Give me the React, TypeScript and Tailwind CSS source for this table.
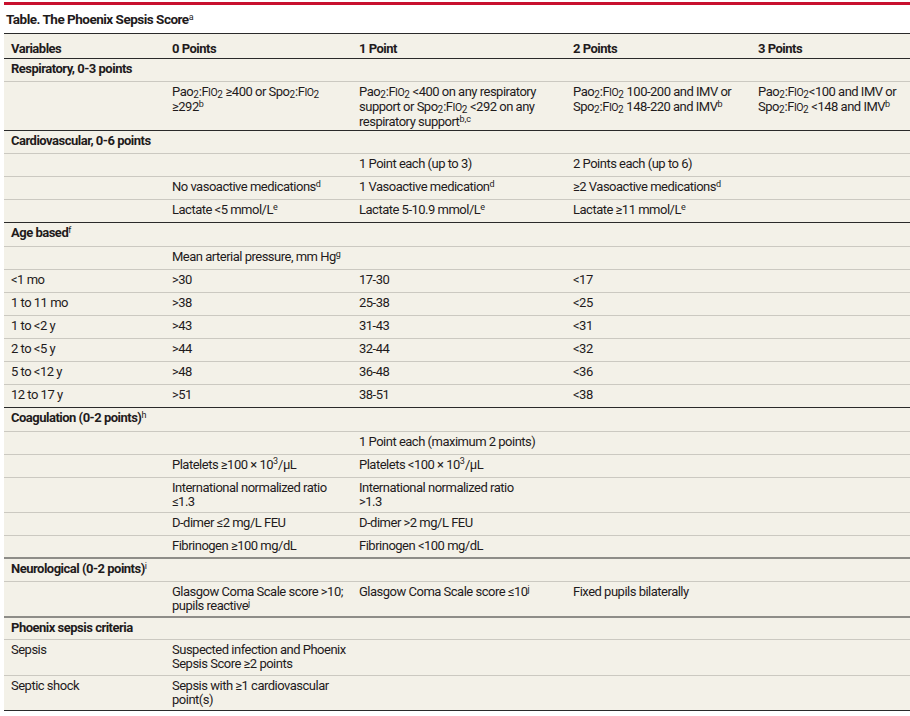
import React from 'react';

const LIGHT = 'border-t border-[#cbc9c1]';
const DARK = 'border-t border-[#2a2a2a]';
const GRAY2 = 'border-t-2 border-[#8e8d88]';

const S = ({ c }: { c: string }) => (
  <sup className="text-[9px] -top-[4px] font-normal tracking-normal">{c}</sup>
);

const Sub2 = () => <sub className="text-[10px] -bottom-[2px] tracking-normal">2</sub>;

const PF = ({ a }: { a: 'Pa' | 'Sp' }) => (
  <>
    {a}o<Sub2 />:F<span className="text-[10.5px]">IO</span>
    <Sub2 />
  </>
);

type RowProps = {
  cells: React.ReactNode[];
  cls: string;
  bold?: boolean;
  pt?: string;
};

function Row({ cells, cls, bold, pt }: RowProps) {
  return (
    <div className={`grid grid-cols-[161px_187px_214px_185px_1fr] ${cls}`}>
      {[0, 1, 2, 3, 4].map((i) => (
        <div
          key={i}
          className={`pl-[7px] leading-[14px] whitespace-nowrap ${pt ?? 'pt-[3px]'} ${bold ? 'font-bold' : ''}`}
        >
          {cells[i] ?? null}
        </div>
      ))}
    </div>
  );
}

export default function App() {
  return (
    <div className="w-[910px] h-[716px] bg-white overflow-hidden text-[#1f1b1c] [font-family:Roboto,'Liberation_Sans',sans-serif] text-[13px] tracking-[-0.5px]">
      <div className="ml-[4px] pt-[2px]">
        <div className="h-[3px] bg-[#c8102e]" />
        <div className="h-[28px] pt-[6px] pl-[2px] leading-[16px] text-[13.5px] tracking-[-0.5px] font-bold">
          Table. The Phoenix Sepsis Score<S c="a" />
        </div>
        <div className="bg-[#f3f1e8] border-b border-[#2a2a2a]">
          <Row
            cls={`h-[25px] ${DARK}`}
            bold
            pt="pt-[8px]"
            cells={['Variables', '0 Points', '1 Point', '2 Points', '3 Points']}
          />
          <Row cls={`h-[23px] ${DARK}`} bold cells={['Respiratory, 0-3 points']} />
          <Row
            cls={`h-[49px] ${LIGHT}`}
            cells={[
              '',
              <>
                <PF a="Pa" /> ≥400 or <PF a="Sp" />
                <br />
                ≥292<S c="b" />
              </>,
              <>
                <PF a="Pa" /> &lt;400 on any respiratory
                <br />
                support or <PF a="Sp" /> &lt;292 on any
                <br />
                respiratory support<S c="b,c" />
              </>,
              <>
                <PF a="Pa" /> 100-200 and IMV or
                <br />
                <PF a="Sp" /> 148-220 and IMV<S c="b" />
              </>,
              <>
                <PF a="Pa" />
                &lt;100 and IMV or
                <br />
                <PF a="Sp" /> &lt;148 and IMV<S c="b" />
              </>,
            ]}
          />
          <Row cls={`h-[23px] ${DARK}`} bold cells={['Cardiovascular, 0-6 points']} />
          <Row
            cls={`h-[23px] ${LIGHT}`}
            cells={['', '', '1 Point each (up to 3)', '2 Points each (up to 6)']}
          />
          <Row
            cls={`h-[23px] ${LIGHT}`}
            cells={[
              '',
              <>No vasoactive medications<S c="d" /></>,
              <>1 Vasoactive medication<S c="d" /></>,
              <>≥2 Vasoactive medications<S c="d" /></>,
            ]}
          />
          <Row
            cls={`h-[23px] ${LIGHT}`}
            cells={[
              '',
              <>Lactate &lt;5 mmol/L<S c="e" /></>,
              <>Lactate 5-10.9 mmol/L<S c="e" /></>,
              <>Lactate ≥11 mmol/L<S c="e" /></>,
            ]}
          />
          <Row cls={`h-[24px] ${DARK}`} bold cells={[<>Age based<S c="f" /></>]} />
          <Row
            cls={`h-[23px] ${LIGHT}`}
            cells={['', <>Mean arterial pressure, mm Hg<S c="g" /></>]}
          />
          <Row cls={`h-[23px] ${LIGHT}`} cells={['<1 mo', '>30', '17-30', '<17']} />
          <Row cls={`h-[23px] ${LIGHT}`} cells={['1 to 11 mo', '>38', '25-38', '<25']} />
          <Row cls={`h-[23px] ${LIGHT}`} cells={['1 to <2 y', '>43', '31-43', '<31']} />
          <Row cls={`h-[23px] ${LIGHT}`} cells={['2 to <5 y', '>44', '32-44', '<32']} />
          <Row cls={`h-[23px] ${LIGHT}`} cells={['5 to <12 y', '>48', '36-48', '<36']} />
          <Row cls={`h-[23px] ${LIGHT}`} cells={['12 to 17 y', '>51', '38-51', '<38']} />
          <Row
            cls={`h-[24px] ${DARK}`}
            bold
            cells={[<>Coagulation (0-2 points)<S c="h" /></>]}
          />
          <Row
            cls={`h-[23px] ${LIGHT}`}
            cells={['', '', '1 Point each (maximum 2 points)']}
          />
          <Row
            cls={`h-[23px] ${LIGHT}`}
            cells={[
              '',
              <>Platelets ≥100 × 10<sup className="text-[9px] -top-[5px] tracking-normal">3</sup>/µL</>,
              <>Platelets &lt;100 × 10<sup className="text-[9px] -top-[5px] tracking-normal">3</sup>/µL</>,
            ]}
          />
          <Row
            cls={`h-[35px] ${LIGHT}`}
            cells={[
              '',
              <>International normalized ratio<br />≤1.3</>,
              <>International normalized ratio<br />&gt;1.3</>,
            ]}
          />
          <Row
            cls={`h-[23px] ${LIGHT}`}
            cells={['', 'D-dimer ≤2 mg/L FEU', 'D-dimer >2 mg/L FEU']}
          />
          <Row
            cls={`h-[22px] ${LIGHT}`}
            cells={['', 'Fibrinogen ≥100 mg/dL', 'Fibrinogen <100 mg/dL']}
          />
          <Row
            cls={`h-[24px] ${GRAY2}`}
            bold
            cells={[<>Neurological (0-2 points)<S c="i" /></>]}
          />
          <Row
            cls={`h-[35px] ${LIGHT}`}
            cells={[
              '',
              <>Glasgow Coma Scale score &gt;10;<br />pupils reactive<S c="j" /></>,
              <>Glasgow Coma Scale score ≤10<S c="j" /></>,
              'Fixed pupils bilaterally',
            ]}
          />
          <Row cls={`h-[23px] ${GRAY2}`} bold cells={['Phoenix sepsis criteria']} />
          <Row
            cls={`h-[36px] ${LIGHT}`}
            cells={[
              'Sepsis',
              <>Suspected infection and Phoenix<br />Sepsis Score ≥2 points</>,
            ]}
          />
          <Row
            cls={`h-[35px] ${LIGHT}`}
            cells={[
              'Septic shock',
              <>Sepsis with ≥1 cardiovascular<br />point(s)</>,
            ]}
          />
        </div>
      </div>
    </div>
  );
}
